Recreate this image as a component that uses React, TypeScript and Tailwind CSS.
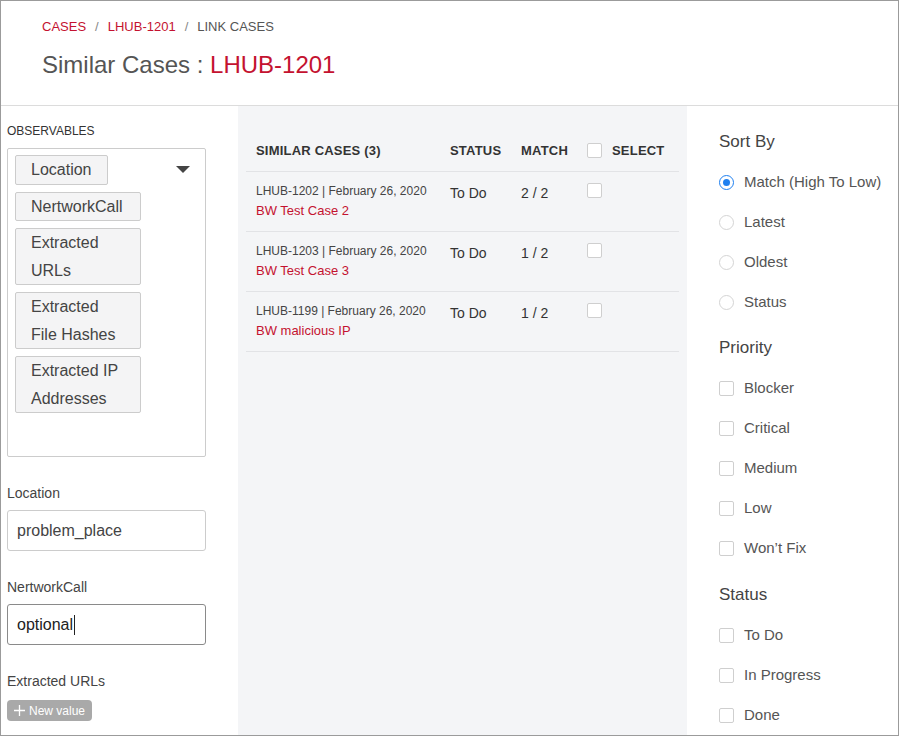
import React from 'react';

const red = 'text-[#c41230]';

const chips: React.ReactNode[] = [
  'Location',
  'NertworkCall',
  <>Extracted<br />URLs</>,
  <>Extracted<br />File Hashes</>,
  <>Extracted IP<br />Addresses</>,
];

const cases = [
  { id: 'LHUB-1202', date: 'February 26, 2020', title: 'BW Test Case 2', status: 'To Do', match: '2 / 2' },
  { id: 'LHUB-1203', date: 'February 26, 2020', title: 'BW Test Case 3', status: 'To Do', match: '1 / 2' },
  { id: 'LHUB-1199', date: 'February 26, 2020', title: 'BW malicious IP', status: 'To Do', match: '1 / 2' },
];

const Box: React.FC = () => (
  <span className="block w-[15px] h-[15px] border border-[#cfcfcf] rounded-[2px] bg-white shrink-0" />
);

const Radio: React.FC<{ on?: boolean }> = ({ on }) => (
  <span
    className={
      'flex items-center justify-center w-[15px] h-[15px] rounded-full border bg-white shrink-0 ' +
      (on ? 'border-[#1f80f0]' : 'border-[#d4d4d4]')
    }
  >
    {on && <span className="block w-[7px] h-[7px] rounded-full bg-[#1f80f0]" />}
  </span>
);

const Option: React.FC<{ label: string; radio?: boolean; on?: boolean }> = ({ label, radio, on }) => (
  <li className="flex items-center gap-[10px] h-[40px]">
    {radio ? <Radio on={on} /> : <Box />}
    <span className="text-[15px] text-[#555]">{label}</span>
  </li>
);

const App: React.FC = () => {
  return (
    <div
      className="w-[899px] h-[736px] border border-[#9b9b9b] bg-white flex flex-col overflow-hidden text-[#333]"
      style={{ fontFamily: '"Liberation Sans", Arial, sans-serif' }}
    >
      {/* Header */}
      <header className="h-[105px] shrink-0 border-b border-[#dcdcdc] px-[41px] pt-[17px]">
        <nav className="flex items-center gap-[9px] text-[13px] leading-[18px] uppercase">
          <span className={red}>Cases</span>
          <span className="text-[#888]">/</span>
          <span className={red}>LHUB-1201</span>
          <span className="text-[#888]">/</span>
          <span className="text-[#555]">Link Cases</span>
        </nav>
        <h1 className="mt-[14px] text-[24px] leading-[30px] text-[#555]">
          Similar Cases : <span className={red}>LHUB-1201</span>
        </h1>
      </header>

      <div className="flex flex-1 min-h-0">
        {/* Observables */}
        <aside className="w-[237px] shrink-0 pl-[6px] pt-[17px]">
          <div className="text-[12px] leading-[16px] uppercase text-[#333]">Observables</div>
          <div className="mt-[9px] w-[199px] h-[309px] border border-[#cccccc] rounded-[2px] pl-[7px] pt-[6px] pr-[15px] flex justify-between items-start">
            <div className="flex flex-col items-start gap-[7px]">
              {chips.map((c, i) => (
                <span
                  key={i}
                  className={
                    'border border-[#cccccc] rounded-[2px] bg-[#f4f4f5] px-[15px] text-[16px] leading-[27.5px] text-[#444] ' +
                    (i === 0 ? '' : 'w-[126px]')
                  }
                >
                  {c}
                </span>
              ))}
            </div>
            <svg width="14" height="8" viewBox="0 0 14 8" className="mt-[11px]">
              <path d="M0 0h14L7 7z" fill="#444" />
            </svg>
          </div>

          <label className="block mt-[27px] text-[14px] leading-[18px] text-[#444]">Location</label>
          <div className="mt-[8px] w-[199px] h-[41px] border border-[#cccccc] rounded-[3px] px-[9px] flex items-center text-[16px] text-[#444]">
            problem_place
          </div>

          <label className="block mt-[27px] text-[14px] leading-[18px] text-[#444]">NertworkCall</label>
          <div className="mt-[8px] w-[199px] h-[41px] border border-[#8a8a8a] rounded-[3px] px-[9px] flex items-center text-[16px] text-[#222]">
            optional<span className="inline-block w-px h-[20px] bg-[#222] ml-px" />
          </div>

          <label className="block mt-[27px] text-[14px] leading-[18px] text-[#444]">Extracted URLs</label>
          <button className="mt-[10px] h-[21px] px-[7px] rounded-[4px] bg-[#a9a9a9] text-white text-[12px] flex items-center gap-[4px]">
            <svg width="11" height="11" viewBox="0 0 11 11">
              <path d="M5.5 0v11M0 5.5h11" stroke="#fff" strokeWidth="1.3" />
            </svg>
            New value
          </button>
        </aside>

        {/* Similar cases table */}
        <main className="w-[449px] shrink-0 bg-[#f4f5f7] px-[8px] pt-[22px]">
          <div className="grid grid-cols-[204px_71px_66px_92px] h-[44px] pt-[2px] items-center border-b border-[#e2e3e6] text-[13px] font-bold tracking-[0.2px] uppercase text-[#333]">
            <span className="pl-[10px]">Similar Cases (3)</span>
            <span>Status</span>
            <span>Match</span>
            <span className="flex items-center gap-[10px]">
              <Box />
              Select
            </span>
          </div>
          {cases.map((c) => (
            <div
              key={c.id}
              className="grid grid-cols-[204px_71px_66px_92px] h-[60px] border-b border-[#e2e3e6] pt-[10px] items-start"
            >
              <div className="pl-[10px]">
                <div className="text-[12px] leading-[18px] text-[#444]">
                  {c.id} | {c.date}
                </div>
                <div className={'text-[13px] leading-[22px] ' + red}>{c.title}</div>
              </div>
              <span className="text-[14px] leading-[22px] text-[#333]">{c.status}</span>
              <span className="text-[14px] leading-[22px] text-[#333]">{c.match}</span>
              <span className="pt-[1px]">
                <Box />
              </span>
            </div>
          ))}
        </main>

        {/* Filters */}
        <section className="flex-1 pl-[32px] pt-[24px]">
          <h3 className="text-[17px] leading-[24px] text-[#444]">Sort By</h3>
          <ul className="mt-[8px]">
            <Option radio on label="Match (High To Low)" />
            <Option radio label="Latest" />
            <Option radio label="Oldest" />
            <Option radio label="Status" />
          </ul>
          <h3 className="mt-[14px] text-[17px] leading-[24px] text-[#444]">Priority</h3>
          <ul className="mt-[8px]">
            <Option label="Blocker" />
            <Option label="Critical" />
            <Option label="Medium" />
            <Option label="Low" />
            <Option label="Won’t Fix" />
          </ul>
          <h3 className="mt-[15px] text-[17px] leading-[24px] text-[#444]">Status</h3>
          <ul className="mt-[8px]">
            <Option label="To Do" />
            <Option label="In Progress" />
            <Option label="Done" />
          </ul>
        </section>
      </div>
    </div>
  );
};

export default App;
